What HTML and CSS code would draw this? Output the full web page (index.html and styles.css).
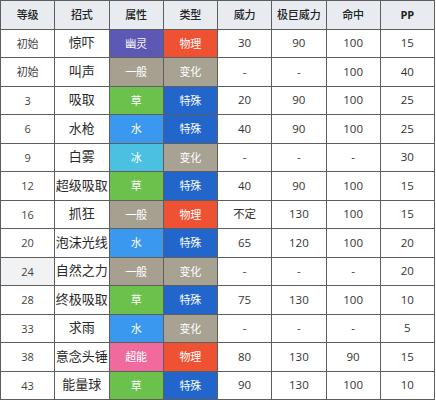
FILE: index.html
```html
<!DOCTYPE html>
<html lang="zh">
<head>
<meta charset="utf-8">
<link rel="stylesheet" href="styles.css">
</head>
<body>
<table class="moves">
  <thead>
    <tr><th>等级</th><th>招式</th><th>属性</th><th>类型</th><th>威力</th><th>极巨威力</th><th>命中</th><th>PP</th></tr>
  </thead>
  <tbody>
    <tr><td class="lv">初始</td><td class="name">惊吓</td><td class="t ghost">幽灵</td><td class="t phys">物理</td><td>30</td><td>90</td><td>100</td><td>15</td></tr>
    <tr><td class="lv">初始</td><td class="name">叫声</td><td class="t normal">一般</td><td class="t status">变化</td><td>-</td><td>-</td><td>100</td><td>40</td></tr>
    <tr><td class="lv">3</td><td class="name">吸取</td><td class="t grass">草</td><td class="t spec">特殊</td><td>20</td><td>90</td><td>100</td><td>25</td></tr>
    <tr><td class="lv">6</td><td class="name">水枪</td><td class="t water">水</td><td class="t spec">特殊</td><td>40</td><td>90</td><td>100</td><td>25</td></tr>
    <tr><td class="lv">9</td><td class="name">白雾</td><td class="t ice">冰</td><td class="t status">变化</td><td>-</td><td>-</td><td>-</td><td>30</td></tr>
    <tr><td class="lv">12</td><td class="name">超级吸取</td><td class="t grass">草</td><td class="t spec">特殊</td><td>40</td><td>90</td><td>100</td><td>15</td></tr>
    <tr><td class="lv">16</td><td class="name">抓狂</td><td class="t normal">一般</td><td class="t phys">物理</td><td>不定</td><td>130</td><td>100</td><td>15</td></tr>
    <tr><td class="lv">20</td><td class="name">泡沫光线</td><td class="t water">水</td><td class="t spec">特殊</td><td>65</td><td>120</td><td>100</td><td>20</td></tr>
    <tr class="hl"><td class="lv">24</td><td class="name">自然之力</td><td class="t normal">一般</td><td class="t status">变化</td><td>-</td><td>-</td><td>-</td><td>20</td></tr>
    <tr><td class="lv">28</td><td class="name">终极吸取</td><td class="t grass">草</td><td class="t spec">特殊</td><td>75</td><td>130</td><td>100</td><td>10</td></tr>
    <tr><td class="lv">33</td><td class="name">求雨</td><td class="t water">水</td><td class="t status">变化</td><td>-</td><td>-</td><td>-</td><td>5</td></tr>
    <tr><td class="lv">38</td><td class="name">意念头锤</td><td class="t psychic">超能</td><td class="t phys">物理</td><td>80</td><td>130</td><td>90</td><td>15</td></tr>
    <tr><td class="lv">43</td><td class="name">能量球</td><td class="t grass">草</td><td class="t spec">特殊</td><td>90</td><td>130</td><td>100</td><td>10</td></tr>
  </tbody>
</table>
</body>
</html>
```
FILE: styles.css
```css
html, body {
  margin: 0;
  padding: 0;
  background: #ffffff;
}
.moves {
  border-collapse: collapse;
  width: 435px;
  height: 399px;
  table-layout: fixed;
  font-family: "Open Sans", "Noto Sans CJK SC", sans-serif;
  color: #333;
}
.moves tr {
  height: 28.5px;
}
.moves th, .moves td {
  border: 1px solid #5e5e5e;
  text-align: center;
  vertical-align: middle;
  padding: 0;
  font-size: 11.5px;
  font-weight: 400;
  white-space: nowrap;
  overflow: hidden;
  line-height: 1.2;
}
.moves th {
  background: #e8ecf1;
  color: #222;
  font-size: 11px;
  font-weight: 500;
}
.moves th:last-child {
  font-weight: 700;
}
.moves td.lv {
  font-size: 11px;
  color: #444;
}
.moves td.name {
  font-size: 13px;
  color: #2a2a2a;
}
.moves tr.hl td.lv {
  background: #f1f2f4;
}
.moves td.t {
  color: #ffffff;
  font-size: 11px;
}
.ghost { background: #5c58b4; }
.phys { background: #ef5232; }
.normal { background: #a7a091; }
.status { background: #a8a293; }
.grass { background: #6bc14c; }
.spec { background: #2266cc; }
.water { background: #3a98ee; }
.ice { background: #4bc0e0; }
.psychic { background: #f06a9e; }
```
